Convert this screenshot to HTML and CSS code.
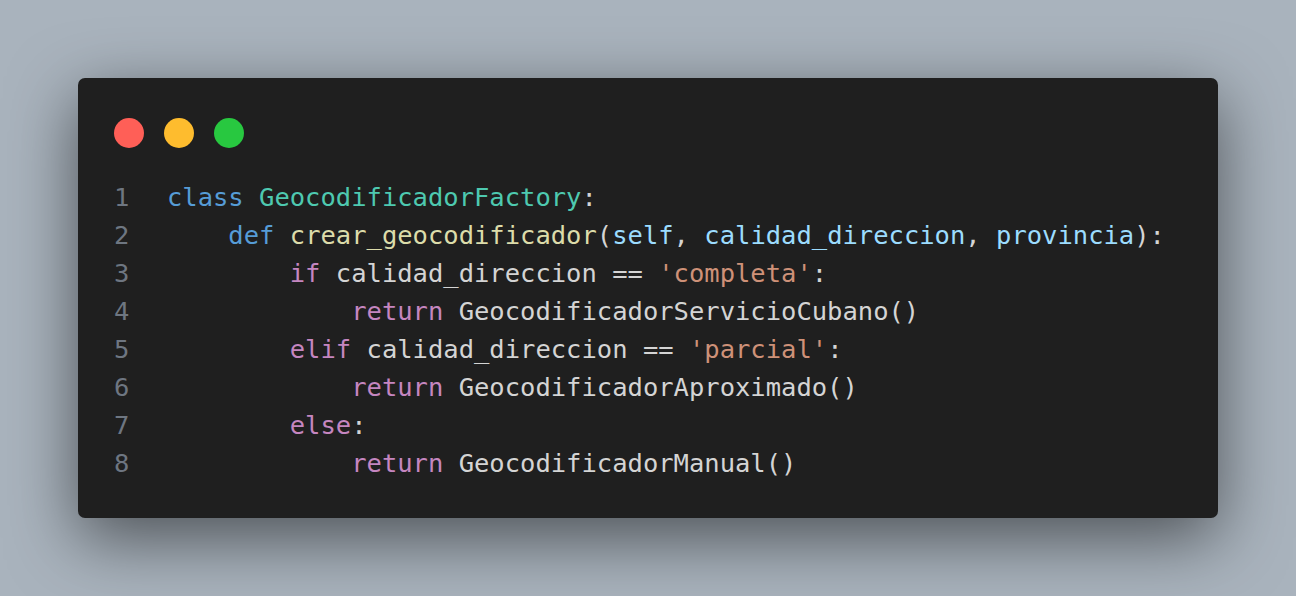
FILE: index.html
```html
<!DOCTYPE html>
<html lang="es">
<head>
<meta charset="utf-8">
<title>Code snippet</title>
<link rel="stylesheet" href="styles.css">
</head>
<body>
<div class="stage">
  <div class="window">
    <div class="controls">
      <span class="dot red"></span>
      <span class="dot yellow"></span>
      <span class="dot green"></span>
    </div>
    <div class="code">
      <div class="line"><span class="ln">1</span><span class="src"><span class="kw">class</span> <span class="cls">GeocodificadorFactory</span>:</span></div>
      <div class="line"><span class="ln">2</span><span class="src">    <span class="kw">def</span> <span class="fn">crear_geocodificador</span>(<span class="pm">self</span>, <span class="pm">calidad_direccion</span>, <span class="pm">provincia</span>):</span></div>
      <div class="line"><span class="ln">3</span><span class="src">        <span class="ctl">if</span> calidad_direccion == <span class="str">'completa'</span>:</span></div>
      <div class="line"><span class="ln">4</span><span class="src">            <span class="ctl">return</span> GeocodificadorServicioCubano()</span></div>
      <div class="line"><span class="ln">5</span><span class="src">        <span class="ctl">elif</span> calidad_direccion == <span class="str">'parcial'</span>:</span></div>
      <div class="line"><span class="ln">6</span><span class="src">            <span class="ctl">return</span> GeocodificadorAproximado()</span></div>
      <div class="line"><span class="ln">7</span><span class="src">        <span class="ctl">else</span>:</span></div>
      <div class="line"><span class="ln">8</span><span class="src">            <span class="ctl">return</span> GeocodificadorManual()</span></div>
    </div>
  </div>
</div>
</body>
</html>
```

FILE: styles.css
```css
html, body {
  margin: 0;
  padding: 0;
}
body {
  width: 1296px;
  height: 596px;
  overflow: hidden;
  background: #a9b3bd;
}
.stage {
  box-sizing: border-box;
  width: 1296px;
  height: 596px;
  padding: 78px 78px 0 78px;
}
.window {
  box-sizing: border-box;
  width: 1140px;
  height: 440px;
  background: #1f1f1f;
  border-radius: 7px;
  box-shadow: 0 20px 68px rgba(0, 0, 0, 0.55);
  padding: 40px 36px 36px 36px;
}
.controls {
  display: flex;
  gap: 20px;
  height: 30px;
}
.dot {
  width: 30px;
  height: 30px;
  border-radius: 50%;
}
.red { background: #ff5f57; }
.yellow { background: #febc2e; }
.green { background: #28c840; }
.code {
  margin-top: 30px;
  font-family: "DejaVu Sans Mono", "Liberation Mono", monospace;
  font-size: 25.5px;
  line-height: 38px;
  color: #d4d4d4;
}
.line {
  display: flex;
  white-space: pre;
}
.ln {
  width: 15.35px;
  margin-right: 37.6px;
  color: #6e7681;
  text-align: right;
}
.kw { color: #569cd6; }
.cls { color: #4ec9b0; }
.fn { color: #dcdcaa; }
.pm { color: #9cdcfe; }
.ctl { color: #c586c0; }
.str { color: #ce9178; }
```
